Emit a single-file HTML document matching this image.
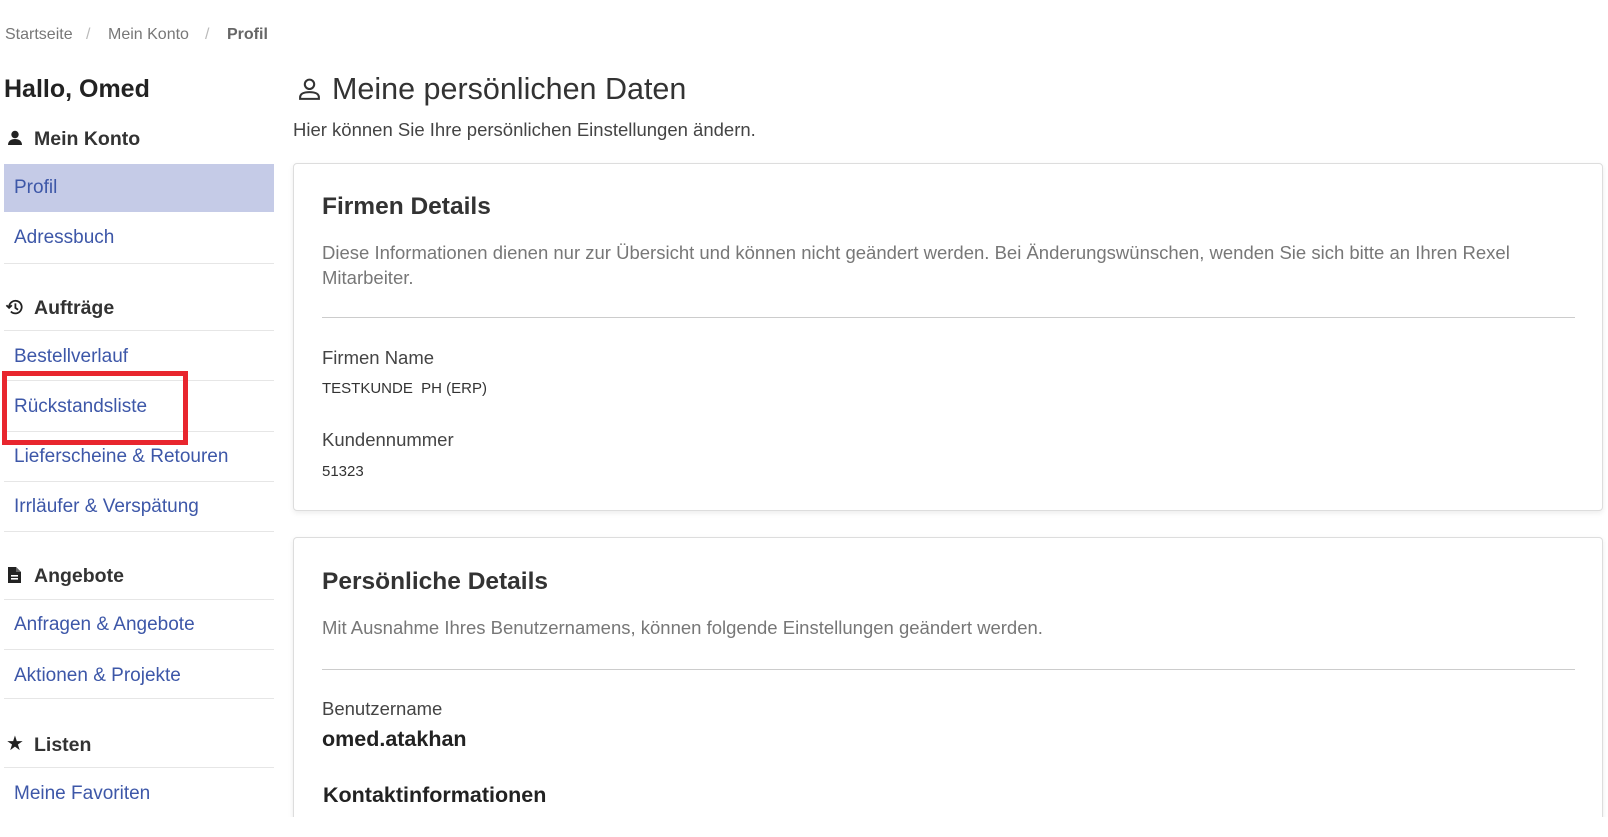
<!DOCTYPE html>
<html style="width:1608px;height:837px;overflow:hidden"><head><meta charset="utf-8"><style>
*{margin:0;padding:0;box-sizing:border-box}
body{width:1608px;height:837px;overflow:hidden;background:#fff;font-family:"Liberation Sans",Arial,sans-serif;color:#333;position:relative}
.a{position:absolute;white-space:nowrap}
.bc{top:26px;font-size:16px;color:#777}
.link{left:14px;font-size:19px;color:#3d57a8}
.line{position:absolute;left:4px;width:270px;height:1px;background:#e6e6e6}
.hd{left:34px;font-size:19.5px;font-weight:bold;color:#333}
.card{position:absolute;left:293px;width:1310px;border:1px solid #ddd;border-radius:4px;box-shadow:0 2px 6px rgba(0,0,0,.08);background:#fff}
.ct{left:322px;font-size:24.5px;font-weight:bold;color:#333}
.desc{left:322px;font-size:18.5px;color:#777;line-height:24.6px}
.hr{position:absolute;left:322px;width:1253px;height:1px;background:#ccc}
.lab{left:322px;font-size:18.5px;color:#444}
.val{left:322px;font-size:15px;color:#333}
</style></head><body>
<div class="a bc" style="left:5px">Startseite</div>
<div class="a bc" style="left:86px;color:#bbb">/</div>
<div class="a bc" style="left:108px">Mein Konto</div>
<div class="a bc" style="left:205px;color:#bbb">/</div>
<div class="a bc" style="left:227px;font-weight:bold;color:#666">Profil</div>

<div class="a" style="left:4px;top:75px;font-size:25px;font-weight:bold;color:#222">Hallo, Omed</div>
<svg class="a" style="left:7px;top:130px" width="16" height="16" viewBox="0 0 16 16"><circle cx="8" cy="4.5" r="3.7" fill="#222"/><path d="M1 15c0-4 3-6 7-6s7 2 7 6z" fill="#222"/></svg>
<div class="a hd" style="top:128px">Mein Konto</div>
<div style="position:absolute;left:4px;top:164px;width:270px;height:48px;background:#c5cbe7"></div>
<div class="a link" style="top:177px">Profil</div>
<div class="a link" style="top:227px">Adressbuch</div>
<div class="line" style="top:263px"></div>

<svg class="a" style="left:5px;top:298px" width="19" height="18" viewBox="0 0 20 20" fill="none" stroke="#222" stroke-width="2"><path d="M4 10a7 7 0 1 1 2 5"/><path d="M1 8l3 3 3-3"/><path d="M11 6v5l3 2"/></svg>
<div class="a hd" style="top:297px">Aufträge</div>
<div class="line" style="top:330px"></div>
<div class="a link" style="top:346px">Bestellverlauf</div>
<div class="line" style="top:380px"></div>
<div class="a link" style="top:396px">Rückstandsliste</div>
<div class="line" style="top:431px"></div>
<div class="a link" style="top:446px">Lieferscheine &amp; Retouren</div>
<div class="line" style="top:481px"></div>
<div class="a link" style="top:496px">Irrläufer &amp; Verspätung</div>
<div class="line" style="top:531px"></div>
<div style="position:absolute;left:2px;top:371px;width:186px;height:74px;border:5px solid #e8262e"></div>

<svg class="a" style="left:8px;top:567px" width="13" height="16" viewBox="0 0 13 16"><path d="M0 0h8l5 5v11H0z" fill="#222"/><path d="M8 0v5h5" fill="#666"/><rect x="3" y="8" width="7" height="1.6" fill="#fff"/><rect x="3" y="11" width="7" height="1.6" fill="#fff"/></svg>
<div class="a hd" style="top:565px">Angebote</div>
<div class="line" style="top:599px"></div>
<div class="a link" style="top:614px">Anfragen &amp; Angebote</div>
<div class="line" style="top:649px"></div>
<div class="a link" style="top:665px">Aktionen &amp; Projekte</div>
<div class="line" style="top:698px"></div>
<div class="a" style="left:6px;top:731px;font-size:20px;color:#222">★</div>
<div class="a hd" style="top:734px">Listen</div>
<div class="line" style="top:767px"></div>
<div class="a link" style="top:783px">Meine Favoriten</div>

<svg class="a" style="left:297px;top:77px" width="25" height="25" viewBox="0 0 24 24" fill="none" stroke="#333" stroke-width="2"><circle cx="12" cy="7" r="4.5"/><path d="M3 21v-1.5c0-3 3-5 9-5s9 2 9 5V21z"/></svg>
<div class="a" style="left:332px;top:72px;font-size:30.5px;color:#333">Meine persönlichen Daten</div>
<div class="a" style="left:293px;top:119px;font-size:18.5px;color:#444">Hier können Sie Ihre persönlichen Einstellungen ändern.</div>

<div class="card" style="top:163px;height:348px"></div>
<div class="a ct" style="top:193px">Firmen Details</div>
<div class="a desc" style="top:241px">Diese Informationen dienen nur zur Übersicht und können nicht geändert werden. Bei Änderungswünschen, wenden Sie sich bitte an Ihren Rexel<br>Mitarbeiter.</div>
<div class="hr" style="top:317px"></div>
<div class="a lab" style="top:347px">Firmen Name</div>
<div class="a val" style="top:380px">TESTKUNDE &nbsp;PH (ERP)</div>
<div class="a lab" style="top:429px">Kundennummer</div>
<div class="a val" style="top:463px">51323</div>

<div class="card" style="top:537px;height:300px;border-bottom:none;border-radius:4px 4px 0 0"></div>
<div class="a ct" style="top:568px">Persönliche Details</div>
<div class="a desc" style="top:616px">Mit Ausnahme Ihres Benutzernamens, können folgende Einstellungen geändert werden.</div>
<div class="hr" style="top:669px"></div>
<div class="a lab" style="top:698px">Benutzername</div>
<div class="a" style="left:322px;top:727px;font-size:21.5px;font-weight:bold;color:#222">omed.atakhan</div>
<div class="a" style="left:323px;top:783px;font-size:21.5px;font-weight:bold;color:#222">Kontaktinformationen</div>
<div style="position:absolute;left:0;top:817px;width:1608px;height:20px;background:#fff"></div>
</body></html>
